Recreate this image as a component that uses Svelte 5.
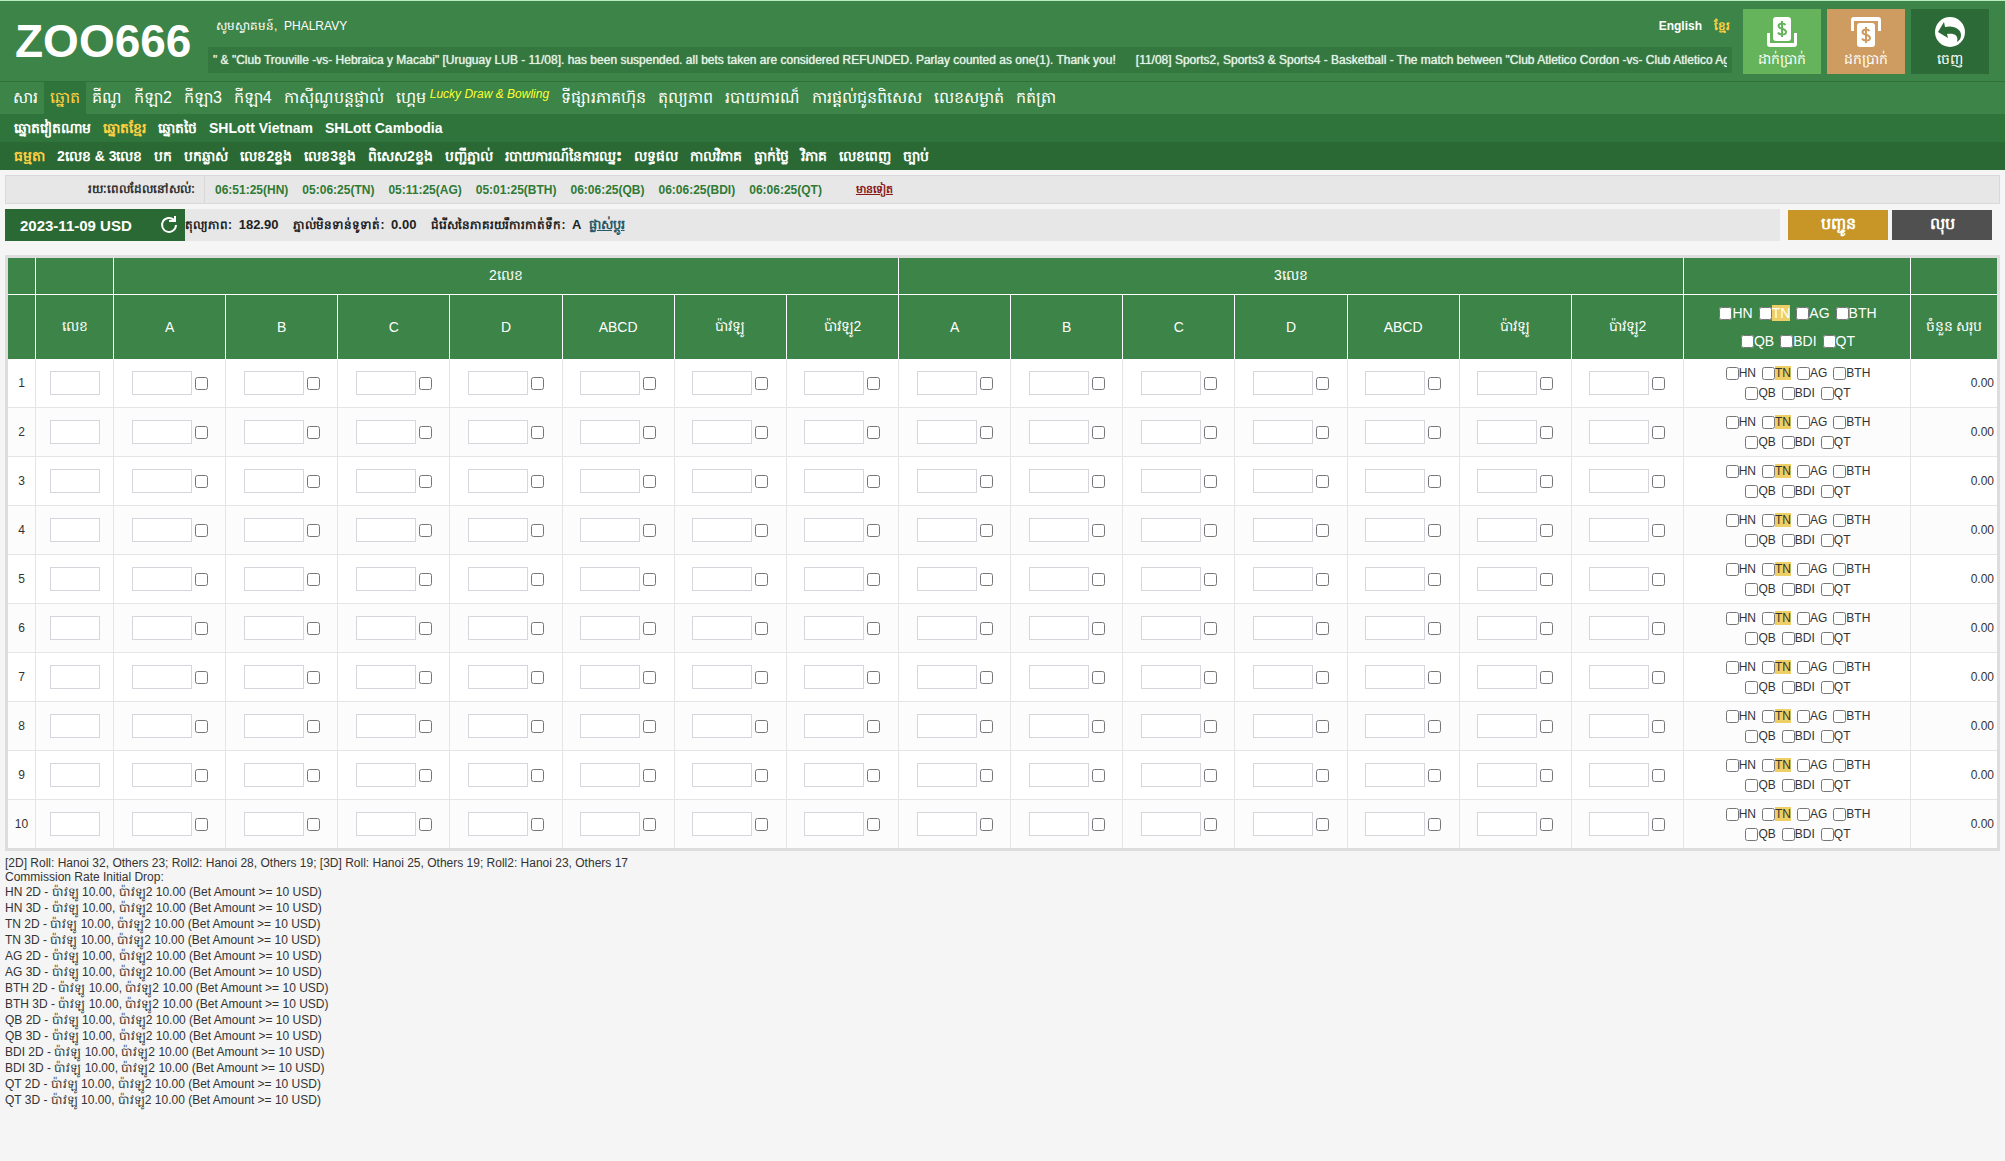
<script>
  const mainMenu = [
    { text: 'សារ' },
    { text: 'ឆ្នោត', active: true },
    { text: 'គីណូ' },
    { text: 'កីឡា2' },
    { text: 'កីឡា3' },
    { text: 'កីឡា4' },
    { text: 'កាស៊ីណូបន្តផ្ទាល់' },
    { text: 'ហ្គេម', promo: 'Lucky Draw & Bowling' },
    { text: 'ទីផ្សារភាគហ៊ុន' },
    { text: 'តុល្យភាព' },
    { text: 'របាយការណ៏' },
    { text: 'ការផ្តល់ជូនពិសេស' },
    { text: 'លេខសម្ងាត់' },
    { text: 'កត់ត្រា' }
  ]
  const lottoMenu = ['ឆ្នោតវៀតណាម', 'ឆ្នោតខ្មែរ', 'ឆ្នោតថៃ', 'SHLott Vietnam', 'SHLott Cambodia']
  const betMenu = [
    'ធម្មតា', '2លេខ & 3លេខ', 'បក', 'បកឆ្លាស់', 'លេខ2ខ្ទង', 'លេខ3ខ្ទង', 'ពិសេស2ខ្ទង',
    'បញ្ជីភ្នាល់', 'របាយការណ៍នៃការឈ្នះ', 'លទ្ធផល', 'កាលវិភាគ', 'ធ្លាក់ថ្លៃ', 'វិភាគ', 'លេខពេញ', 'ច្បាប់'
  ]
  const times = [
    '06:51:25(HN)', '05:06:25(TN)', '05:11:25(AG)', '05:01:25(BTH)',
    '06:06:25(QB)', '06:06:25(BDI)', '06:06:25(QT)'
  ]
  const news = [
    '" & "Club Trouville -vs- Hebraica y Macabi" [Uruguay LUB - 11/08]. has been suspended. all bets taken are considered REFUNDED. Parlay counted as one(1). Thank you!',
    '[11/08] Sports2, Sports3 & Sports4 - Basketball - The match between "Club Atletico Cordon -vs- Club Atletico Ag'
  ]
  const groups = ['2លេខ', '3លេខ']
  const columns = ['A', 'B', 'C', 'D', 'ABCD', 'ប៉ាវឡូ', 'ប៉ាវឡូ2']
  const markets = ['HN', 'TN', 'AG', 'BTH', 'QB', 'BDI', 'QT']
  const rows = Array.from({ length: 10 }, (_, i) => i + 1)
  const rates = markets.flatMap(m => [`${m} 2D`, `${m} 3D`])
</script>

<header>
  <div class="top">
    <h1>ZOO666</h1>
    <div class="middle">
      <div class="welcome">
        <span>សូមស្វាគមន៍, &nbsp;PHALRAVY</span>
        <span class="languages">
          <a href="#en">English</a>
          <a href="#km" class="active">ខ្មែរ</a>
        </span>
      </div>
      <div class="ticker">
        <div class="news">
          {#each news as item}
            <span>{item}</span>
          {/each}
        </div>
      </div>
    </div>
    <div class="tiles">
      <button class="deposit">
        <svg width="30" height="30" viewBox="0 0 30 30">
          <path fill="#fff" d="M0 16h3v10h24V16h3v11q0 3-3 3H3q-3 0-3-3z" />
          <rect x="6" y="0" width="18" height="24" rx="3" fill="#fff" />
          <path fill="none" stroke="#65b45b" stroke-width="2" d="M18.500 8q-1-1.500-3.500-1.500-3.500 0-3.500 2.500c0 3.500 7.500 2 7.500 6q0 2.500-4 2.500-3 0-4-2M15 4v16" />
        </svg>
        <span>ដាក់ប្រាក់</span>
      </button>
      <button class="withdraw">
        <svg width="30" height="30" viewBox="0 0 30 30">
          <path fill="#fff" d="M0 14h3V4h24v10h3V3q0-3-3-3H3q-3 0-3 3z" />
          <rect x="6" y="6" width="18" height="24" rx="3" fill="#fff" />
          <path fill="none" stroke="#ce9c61" stroke-width="2" d="M18.500 14q-1-1.500-3.500-1.500-3.500 0-3.500 2.500c0 3.500 7.500 2 7.500 6q0 2.500-4 2.500-3 0-4-2M15 10v16" />
        </svg>
        <span>ដកប្រាក់</span>
      </button>
      <button class="logout">
        <svg width="30" height="30" viewBox="0 0 30 30">
          <circle cx="15" cy="15" r="15" fill="#fff" />
          <path fill="#2c6a37" d="M3 15L9 5l1 5c9-2 16 2 16 8 0 3-1 5-4 7 2-7-3-9-10-8l1 4z" />
        </svg>
        <span>ចេញ</span>
      </button>
    </div>
  </div>
  <nav class="main-menu">
    {#each mainMenu as item}
      <a href="#menu" class:active={item.active}>{item.text}{#if item.promo}<em>{item.promo}</em>{/if}</a>
    {/each}
  </nav>
  <nav class="lotto-menu">
    {#each lottoMenu as item, i}
      <a href="#lotto" class:active={i === 1}>{item}</a>
    {/each}
  </nav>
  <nav class="bet-menu">
    {#each betMenu as item, i}
      <a href="#bet" class:active={i === 0}>{item}</a>
    {/each}
  </nav>
</header>

<main>
  <div class="timebar">
    <div class="label">រយៈពេលដែលនៅសល់:</div>
    {#each times as time}
      <span>{time}</span>
    {/each}
    <a href="#more">មានទៀត</a>
  </div>

  <div class="account">
    <div class="date">
      2023-11-09 USD
      <button class="refresh" aria-label="Refresh">
        <svg width="18" height="18" viewBox="0 0 18 18">
          <path fill="none" stroke="#fff" stroke-width="2" d="M14 4a7 7 0 1 0 2 5" />
          <path fill="none" stroke="#fff" stroke-width="2" d="M15 0v5h-6" />
        </svg>
      </button>
    </div>
    <div class="balance">
      <span>តុល្យភាព: &nbsp;<b>182.90</b></span>
      <span>ភ្នាល់មិនទាន់ទូទាត់: &nbsp;<b>0.00</b></span>
      <span>ជំរើសនៃភាគរយរឺការកាត់ទឹក: &nbsp;<b>A <a href="#change">ផ្លាស់ប្តូរ</a></b></span>
    </div>
    <div class="actions">
      <button class="send">បញ្ជូន</button>
      <button class="clear">លុប</button>
    </div>
  </div>

  <table>
    <colgroup>
      <col class="c-no" />
      <col class="c-number" />
      {#each groups as _}
        {#each columns as _}
          <col />
        {/each}
      {/each}
      <col class="c-market" />
      <col class="c-total" />
    </colgroup>
    <thead>
      <tr class="group">
        <th></th>
        <th></th>
        {#each groups as group}
          <th colspan="7">{group}</th>
        {/each}
        <th></th>
        <th></th>
      </tr>
      <tr class="names">
        <th></th>
        <th>លេខ</th>
        {#each groups as _}
          {#each columns as column}
            <th>{column}</th>
          {/each}
        {/each}
        <th>
          <div class="markets">
            {#each markets as market}
              <label><input type="checkbox" /><span class:marked={market === 'TN'}>{market}</span></label>
            {/each}
          </div>
        </th>
        <th>ចំនួន សរុប</th>
      </tr>
    </thead>
    <tbody>
      {#each rows as row}
        <tr>
          <td>{row}</td>
          <td><input type="text" class="number" aria-label="Number {row}" /></td>
          {#each groups as group}
            {#each columns as column}
              <td>
                <div class="bet">
                  <input type="text" aria-label="{group} {column} {row}" />
                  <input type="checkbox" aria-label="{group} {column} {row} roll" />
                </div>
              </td>
            {/each}
          {/each}
          <td>
            <div class="markets">
              {#each markets as market}
                <label><input type="checkbox" /><span class:marked={market === 'TN'}>{market}</span></label>
              {/each}
            </div>
          </td>
          <td class="total">0.00</td>
        </tr>
      {/each}
    </tbody>
  </table>

  <div class="notes">
    <p>[2D] Roll: Hanoi 32, Others 23; Roll2: Hanoi 28, Others 19; [3D] Roll: Hanoi 25, Others 19; Roll2: Hanoi 23, Others 17</p>
    <p>Commission Rate Initial Drop:</p>
    {#each rates as rate}
      <p class="rate">{rate} - ប៉ាវឡូ 10.00, ប៉ាវឡូ2 10.00 (Bet Amount &gt;= 10 USD)</p>
    {/each}
  </div>
</main>

<style>
:global(body) {
  margin: 0;
  background: #f5f5f5;
  font-family: "Liberation Sans", Arial, sans-serif;
  font-size: 12px;
  color: #333;
}

button {
  font-family: inherit;
  border: 0;
  padding: 0;
  cursor: pointer;
}

header {
  color: #fff;
  border-top: 1px solid #b9ecc0;
}

header a {
  color: #fff;
  text-decoration: none;
}

header a.active {
  color: #ffd042;
}

.top {
  display: flex;
  height: 80px;
  background: #3c8447;
}

h1 {
  margin: 0;
  width: 193px;
  padding-left: 15px;
  font-size: 46px;
  line-height: 80px;
}

.middle {
  flex: 1;
  min-width: 0;
}

.welcome {
  display: flex;
  justify-content: space-between;
  height: 46px;
  line-height: 50px;
  padding: 0 2px 0 8px;
}

.languages {
  display: flex;
  gap: 12px;
  font-weight: bold;
}

.ticker {
  background: #347840;
  padding: 0 5px;
}

.news {
  display: flex;
  gap: 20px;
  overflow: hidden;
  white-space: nowrap;
  line-height: 26px;
  color: #e4f2e5;
  text-shadow: 0 0 1px #e4f2e5;
}

.tiles {
  display: flex;
  gap: 6px;
  padding: 8px 16px 0 11px;
}

.tiles button {
  display: flex;
  flex-direction: column;
  align-items: center;
  width: 78px;
  height: 65px;
  padding-top: 8px;
  color: #fff;
  font-size: 14px;
  line-height: 24px;
}

.tiles svg {
  flex: none;
}

.deposit {
  background: #65b45b;
}

.withdraw {
  background: #ce9c61;
}

.logout {
  background: #2c6a37;
}

nav {
  display: flex;
  white-space: nowrap;
}

.main-menu {
  height: 32px;
  padding-left: 7px;
  border-top: 1px solid #2f7039;
  background: #3c8447;
  font-size: 16px;
  line-height: 32px;
}

.main-menu a {
  padding: 0 6px;
}

.main-menu a.active {
  background: #2f753b;
}

em {
  margin-left: 4px;
  font-size: 12px;
  color: #ff3;
  vertical-align: 5px;
  line-height: 12px;
}

.lotto-menu, .bet-menu {
  gap: 12px;
  padding-left: 14px;
  font-size: 14px;
  font-weight: bold;
  line-height: 28px;
  height: 28px;
}

.lotto-menu {
  background: #2f753b;
}

.bet-menu {
  background: #2a6934;
}

main {
  padding: 5px;
}

.timebar {
  display: flex;
  align-items: center;
  height: 27px;
  border: 1px solid #d9d9d9;
  background: #e7e7e7;
  color: #2f7a35;
  font-weight: bold;
}

.label {
  box-sizing: border-box;
  width: 199px;
  margin-right: 10px;
  padding-right: 9px;
  border-right: 1px solid #d9d9d9;
  line-height: 27px;
  text-align: right;
  color: #333;
}

.timebar span {
  margin-right: 14px;
}

.timebar a {
  margin-left: 20px;
  font-size: 11px;
  color: #8b1a1a;
}

.account {
  display: flex;
  height: 32px;
  margin: 5px 0 14px;
}

.date {
  display: flex;
  align-items: center;
  justify-content: space-between;
  box-sizing: border-box;
  width: 180px;
  padding: 0 7px 0 15px;
  background: #2a6934;
  color: #fff;
  font-size: 15px;
  font-weight: bold;
}

.refresh {
  display: flex;
  background: none;
}

.balance {
  display: flex;
  flex: 1;
  gap: 15px;
  background: #e7e7e7;
  color: #222;
  font-weight: bold;
  line-height: 32px;
}

.balance b {
  font-size: 13px;
}

.balance a {
  margin-left: 4px;
  color: #28596a;
}

.actions {
  display: flex;
  gap: 4px;
  padding: 1px 8px;
}

.actions button {
  width: 100px;
  color: #fff;
  font-size: 16px;
  font-weight: bold;
}

.send {
  background: #c79627;
}

.clear {
  background: #505050;
}

table {
  width: 100%;
  table-layout: fixed;
  box-sizing: border-box;
  border: 3px solid #ddd;
  border-spacing: 0;
}

.c-no {
  width: 28px;
}

.c-number {
  width: 78px;
}

.c-market {
  width: 227px;
}

.c-total {
  width: 86px;
}

th, td {
  padding: 0;
  text-align: center;
}

th {
  border-right: 1px solid #fff;
  background: #3c8447;
  color: #fff;
  font-size: 14px;
  font-weight: normal;
}

th:last-child, td:last-child {
  border-right: 0;
}

.group th {
  height: 36px;
  border-bottom: 1px solid #fff;
}

.names th {
  height: 64px;
}

td {
  height: 48px;
  border-right: 1px solid #e5e5e5;
  border-bottom: 1px solid #e5e5e5;
  background: #fff;
}

tbody tr:nth-child(even) td {
  background: #fcfcfc;
}

tbody tr:last-child td {
  border-bottom: 0;
}

input[type='text'] {
  box-sizing: border-box;
  width: 60px;
  height: 24px;
  padding: 0 3px;
  border: 1px solid #d5d5dc;
  background: #fff;
}

input.number {
  width: 50px;
}

input[type='checkbox'] {
  width: 13px;
  height: 13px;
  margin: 0;
}

.bet {
  display: flex;
  align-items: center;
  justify-content: center;
  gap: 3px;
}

.markets {
  display: flex;
  flex-wrap: wrap;
  justify-content: center;
  column-gap: 6px;
  padding: 0 28px 0 30px;
}

.markets label {
  display: flex;
  align-items: center;
  height: 20px;
}

th .markets label {
  height: 28px;
}

.marked {
  background: #edcf66;
}

td.total {
  padding-right: 3px;
  text-align: right;
}

.notes p {
  margin: 0;
  line-height: 14px;
}

.notes {
  padding-top: 5px;
}

.notes p.rate {
  line-height: 16px;
}
</style>
